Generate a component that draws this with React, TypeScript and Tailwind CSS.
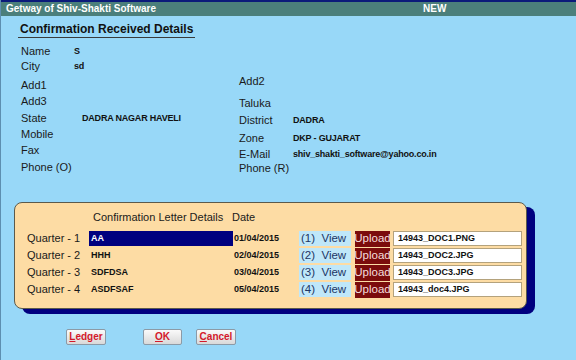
const leftRows = [
  { label: "Name", value: "S", h: "h-[15px]", vx: "pl-[53px]" },
  { label: "City", value: "sd", h: "h-[19px]", vx: "pl-[53px]" },
  { label: "Add1", value: "", h: "h-[16px]", vx: "pl-[53px]" },
  { label: "Add3", value: "", h: "h-[17px]", vx: "pl-[53px]" },
  { label: "State", value: "DADRA NAGAR HAVELI", h: "h-[16px]", vx: "pl-[61px]" },
  { label: "Mobile", value: "", h: "h-[16px]", vx: "pl-[53px]" },
  { label: "Fax", value: "", h: "h-[17px]", vx: "pl-[53px]" },
  { label: "Phone (O)", value: "", h: "h-[16px]", vx: "pl-[53px]" },
];

const rightRows = [
  { label: "Add2", value: "", h: "h-[22px]" },
  { label: "Taluka", value: "", h: "h-[17px]" },
  { label: "District", value: "DADRA", h: "h-[18px]" },
  { label: "Zone", value: "DKP - GUJARAT", h: "h-[16px]" },
  { label: "E-Mail", value: "shiv_shakti_software@yahoo.co.in", h: "h-[14px]" },
  { label: "Phone (R)", value: "", h: "h-[16px]" },
];

const quarters = [
  { q: "Quarter - 1", text: "AA", date: "01/04/2015", file: "14943_DOC1.PNG", active: true },
  { q: "Quarter - 2", text: "HHH", date: "02/04/2015", file: "14943_DOC2.JPG", active: false },
  { q: "Quarter - 3", text: "SDFDSA", date: "03/04/2015", file: "14943_DOC3.JPG", active: false },
  { q: "Quarter - 4", text: "ASDFSAF", date: "05/04/2015", file: "14943_doc4.JPG", active: false },
];

const Field = ({ label, value, h, vx }: { label: string; value: string; h: string; vx: string }) => (
  <div className={`relative ${h}`}>
    <span className="absolute left-0 top-0 leading-[16px] text-[11px] text-[#1a1a1a]">{label}</span>
    {value && (
      <span className={`block ${vx} leading-[16px] text-[9px] font-bold text-[#111] tracking-[-0.2px]`}>{value}</span>
    )}
  </div>
);

const Btn = ({ first, rest, w }: { first: string; rest: string; w: string }) => (
  <button
    className={`${w} h-[16px] flex items-center justify-center rounded-[2px] border border-[#8c9aa6] bg-gradient-to-b from-[#fafafa] to-[#d9d9d9] text-[10px] font-bold text-[#d4192b] leading-none`}
  >
    <span className="underline">{first}</span>
    {rest}
  </button>
);

export default function App() {
  return (
    <div className="w-[576px] h-[360px] overflow-hidden bg-[#98d8f8] border-l border-[#5d8fb0] font-['Liberation_Sans',Arial,sans-serif]">
      {/* Title bar */}
      <div className="h-[16px] border-t-2 border-[#0b1a7a] bg-[#4b7f7b] flex items-center text-white text-[10px] font-bold leading-none">
        <span className="w-[422px] pl-[5px]">Getway of Shiv-Shakti Software</span>
        <span>NEW</span>
      </div>

      {/* Heading */}
      <div className="pt-[5px] pl-[17px]">
        <div className="w-fit px-[2px] border-b border-[#3a3a3a] text-[12px] font-bold leading-[16px] text-[#111]">
          Confirmation Received Details
        </div>
      </div>

      {/* Info columns */}
      <div className="flex mt-[5px] pl-[20px]">
        <div className="w-[218px]">
          {leftRows.map((r) => (
            <Field key={r.label} {...r} />
          ))}
        </div>
        <div className="pt-[30px] flex-1">
          {rightRows.map((r) => (
            <Field key={r.label} {...r} vx="pl-[54px]" />
          ))}
        </div>
      </div>

      {/* Confirmation letter panel */}
      <div className="mt-[26px] ml-[13px] w-[513px] h-[107px] rounded-[8px] border border-[#5b5a4c] bg-[#fddca4] shadow-[8px_5px_0_0_#00007f] pt-[6px]">
        <div className="flex text-[11px] leading-[16px] text-[#1a1a1a]">
          <span className="ml-[78px] w-[139px]">Confirmation Letter Details</span>
          <span>Date</span>
        </div>
        <div className="mt-[5px]">
          {quarters.map((r) => (
            <div key={r.q} className="flex items-center h-[17px]">
              <span className="ml-[12px] w-[62px] text-[11px] text-[#1a1a1a]">{r.q}</span>
              <span
                className={`w-[144px] h-[15px] flex items-center pl-[2px] text-[9px] font-bold ${
                  r.active ? "bg-[#00007f] text-white" : "text-[#111]"
                }`}
              >
                {r.text}
              </span>
              <span className="ml-[1px] w-[65px] text-[9px] font-bold text-[#111]">{r.date}</span>
              <span className="w-[52px] h-[15px] flex items-center pl-[2px] bg-[#bfe7f9] text-[11.5px] text-[#1c3565] whitespace-pre">
                {`(${r.q.slice(-1)})  View`}
              </span>
              <span className="ml-[4px] w-[35px] h-[16px] flex items-center justify-center bg-[#7b0c0c] text-[11.5px] text-[#f6dede]">
                Upload
              </span>
              <span className="ml-[3px] w-[129px] h-[15px] flex items-center pl-[4px] bg-white border border-[#b4a27c] text-[9px] font-bold text-[#111]">
                {r.file}
              </span>
            </div>
          ))}
        </div>
      </div>

      {/* Buttons */}
      <div className="flex mt-[20px]">
        <div className="ml-[65px]">
          <Btn first="L" rest="edger" w="w-[40px]" />
        </div>
        <div className="ml-[37px]">
          <Btn first="O" rest="K" w="w-[39px]" />
        </div>
        <div className="ml-[14px]">
          <Btn first="C" rest="ancel" w="w-[40px]" />
        </div>
      </div>
    </div>
  );
}
